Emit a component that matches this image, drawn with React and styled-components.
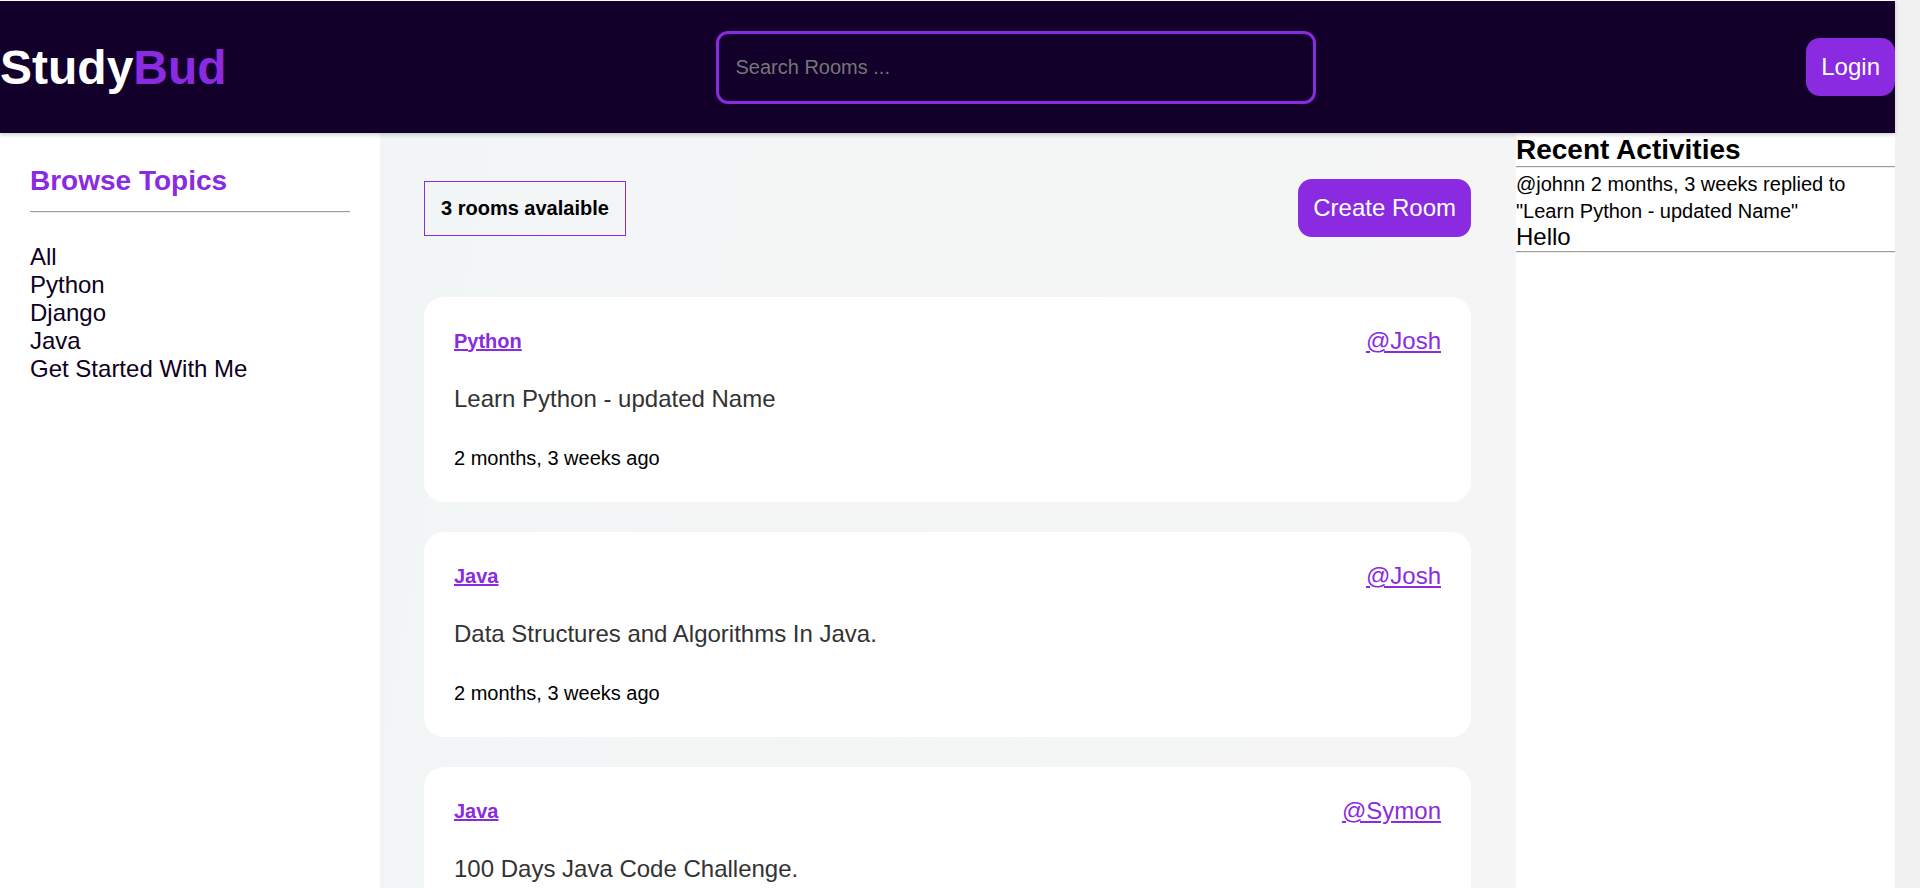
import React from 'react';
import styled, { createGlobalStyle } from 'styled-components';

const PURPLE = '#8a2be2';
const NIGHT = '#12002b';

const GlobalStyle = createGlobalStyle`
  body {
    margin: 0;
    font-family: "Liberation Sans", Arial, sans-serif;
    background: #f1f1f1;
  }
  *, *::before, *::after { box-sizing: border-box; }
`;

const Page = styled.div`
  width: calc(100% - 25px);
  min-height: 100vh;
  display: flex;
  flex-direction: column;
  background: #ffffff;
`;

const Header = styled.header`
  position: relative;
  z-index: 1;
  height: 133px;
  border-top: 1px solid #ffffff;
  background: ${NIGHT};
  display: flex;
  align-items: center;
  justify-content: space-between;
  box-shadow: 0 2px 4px rgba(0, 0, 0, 0.18);
`;

const Logo = styled.h1`
  margin: 0;
  font-size: 48px;
  font-weight: 700;
  color: #ffffff;
  line-height: normal;
`;

const LogoAccent = styled.span`
  color: ${PURPLE};
`;

const SearchInput = styled.input`
  width: 600px;
  padding: 22px 16px;
  border: 3px solid ${PURPLE};
  border-radius: 12px;
  background: transparent;
  color: #ffffff;
  font-family: inherit;
  font-size: 20px;
  line-height: 23px;
  outline: none;

  &::placeholder {
    color: #767676;
  }
`;

const PrimaryButton = styled.button`
  border: none;
  border-radius: 14px;
  background: ${PURPLE};
  color: #ffffff;
  font-family: inherit;
  font-size: 24px;
  line-height: normal;
  padding: 15px;
  cursor: pointer;
`;

const Main = styled.main`
  flex: 1;
  display: grid;
  grid-template-columns: 380px 1fr 379px;
`;

const Sidebar = styled.aside`
  background: #ffffff;
  padding: 32px 30px 30px;
`;

const SidebarTitle = styled.h3`
  margin: 0;
  font-size: 28px;
  font-weight: 700;
  color: ${PURPLE};
  line-height: normal;
`;

const Rule = styled.hr`
  height: 0;
  margin: ${(p) => p.$top || 0}px 0 0;
  border: 0;
  border-top: 1px solid #9c9c9c;
  border-bottom: 1px solid #ececec;
`;

const TopicList = styled.nav`
  margin-top: 30px;
  display: flex;
  flex-direction: column;
`;

const TopicLink = styled.a`
  font-size: 24px;
  line-height: 28px;
  color: #0d0020;
  text-decoration: none;
`;

const Feed = styled.section`
  padding: 46px 45px 78px 44px;
  background: linear-gradient(100deg, #f2f5f6 0%, #f4f5f5 60%, #f5f5f5 100%);
`;

const Toolbar = styled.div`
  display: flex;
  align-items: center;
  justify-content: space-between;
`;

const CountBox = styled.div`
  border: 1px solid ${PURPLE};
  padding: 15px 16px;
  font-size: 20px;
  font-weight: 700;
  line-height: 23px;
  color: #000000;
`;

const CardList = styled.div`
  margin-top: 60px;
  display: flex;
  flex-direction: column;
  gap: 30px;
`;

const Card = styled.article`
  background: #ffffff;
  border-radius: 20px;
  padding: 30px 30px 32px;
`;

const CardTop = styled.div`
  display: flex;
  align-items: center;
  justify-content: space-between;
`;

const TopicTag = styled.a`
  font-size: 20px;
  font-weight: 700;
  color: ${PURPLE};
  text-decoration: underline;
  line-height: 23px;
`;

const HostLink = styled.a`
  font-size: 24px;
  color: ${PURPLE};
  text-decoration: underline;
  line-height: normal;
`;

const RoomTitle = styled.div`
  margin-top: 30px;
  font-size: 24px;
  line-height: normal;
  color: #333333;
`;

const RoomDate = styled.div`
  margin-top: 34px;
  font-size: 20px;
  line-height: 23px;
  color: #000000;
`;

const Activity = styled.aside`
  background: #ffffff;
  padding-top: 1px;
`;

const ActivityTitle = styled.h3`
  margin: 0;
  font-size: 28px;
  font-weight: 700;
  color: #000000;
  line-height: normal;
`;

const ActivityText = styled.p`
  margin: 0;
  padding-top: 3px;
  font-size: 20px;
  line-height: 27px;
  color: #000000;
`;

const ActivityReply = styled.div`
  margin-top: -2px;
  font-size: 24px;
  line-height: normal;
  color: #000000;
`;

const topics = ['All', 'Python', 'Django', 'Java', 'Get Started With Me'];

const rooms = [
  { topic: 'Python', host: '@Josh', title: 'Learn Python - updated Name', date: '2 months, 3 weeks ago' },
  { topic: 'Java', host: '@Josh', title: 'Data Structures and Algorithms In Java.', date: '2 months, 3 weeks ago' },
  { topic: 'Java', host: '@Symon', title: '100 Days Java Code Challenge.', date: '2 months, 3 weeks ago' },
];

export default function App() {
  return (
    <Page>
      <GlobalStyle />
      <Header>
        <Logo>
          Study<LogoAccent>Bud</LogoAccent>
        </Logo>
        <SearchInput type="text" placeholder="Search Rooms ..." />
        <PrimaryButton>Login</PrimaryButton>
      </Header>
      <Main>
        <Sidebar>
          <SidebarTitle>Browse Topics</SidebarTitle>
          <Rule $top={14} />
          <TopicList>
            {topics.map((t) => (
              <TopicLink key={t} href="#">
                {t}
              </TopicLink>
            ))}
          </TopicList>
        </Sidebar>
        <Feed>
          <Toolbar>
            <CountBox>3 rooms avalaible</CountBox>
            <PrimaryButton>Create Room</PrimaryButton>
          </Toolbar>
          <CardList>
            {rooms.map((r, i) => (
              <Card key={i}>
                <CardTop>
                  <TopicTag href="#">{r.topic}</TopicTag>
                  <HostLink href="#">{r.host}</HostLink>
                </CardTop>
                <RoomTitle>{r.title}</RoomTitle>
                <RoomDate>{r.date}</RoomDate>
              </Card>
            ))}
          </CardList>
        </Feed>
        <Activity>
          <ActivityTitle>Recent Activities</ActivityTitle>
          <Rule />
          <ActivityText>
            @johnn 2 months, 3 weeks replied to "Learn Python - updated Name"
          </ActivityText>
          <ActivityReply>Hello</ActivityReply>
          <Rule />
        </Activity>
      </Main>
    </Page>
  );
}
